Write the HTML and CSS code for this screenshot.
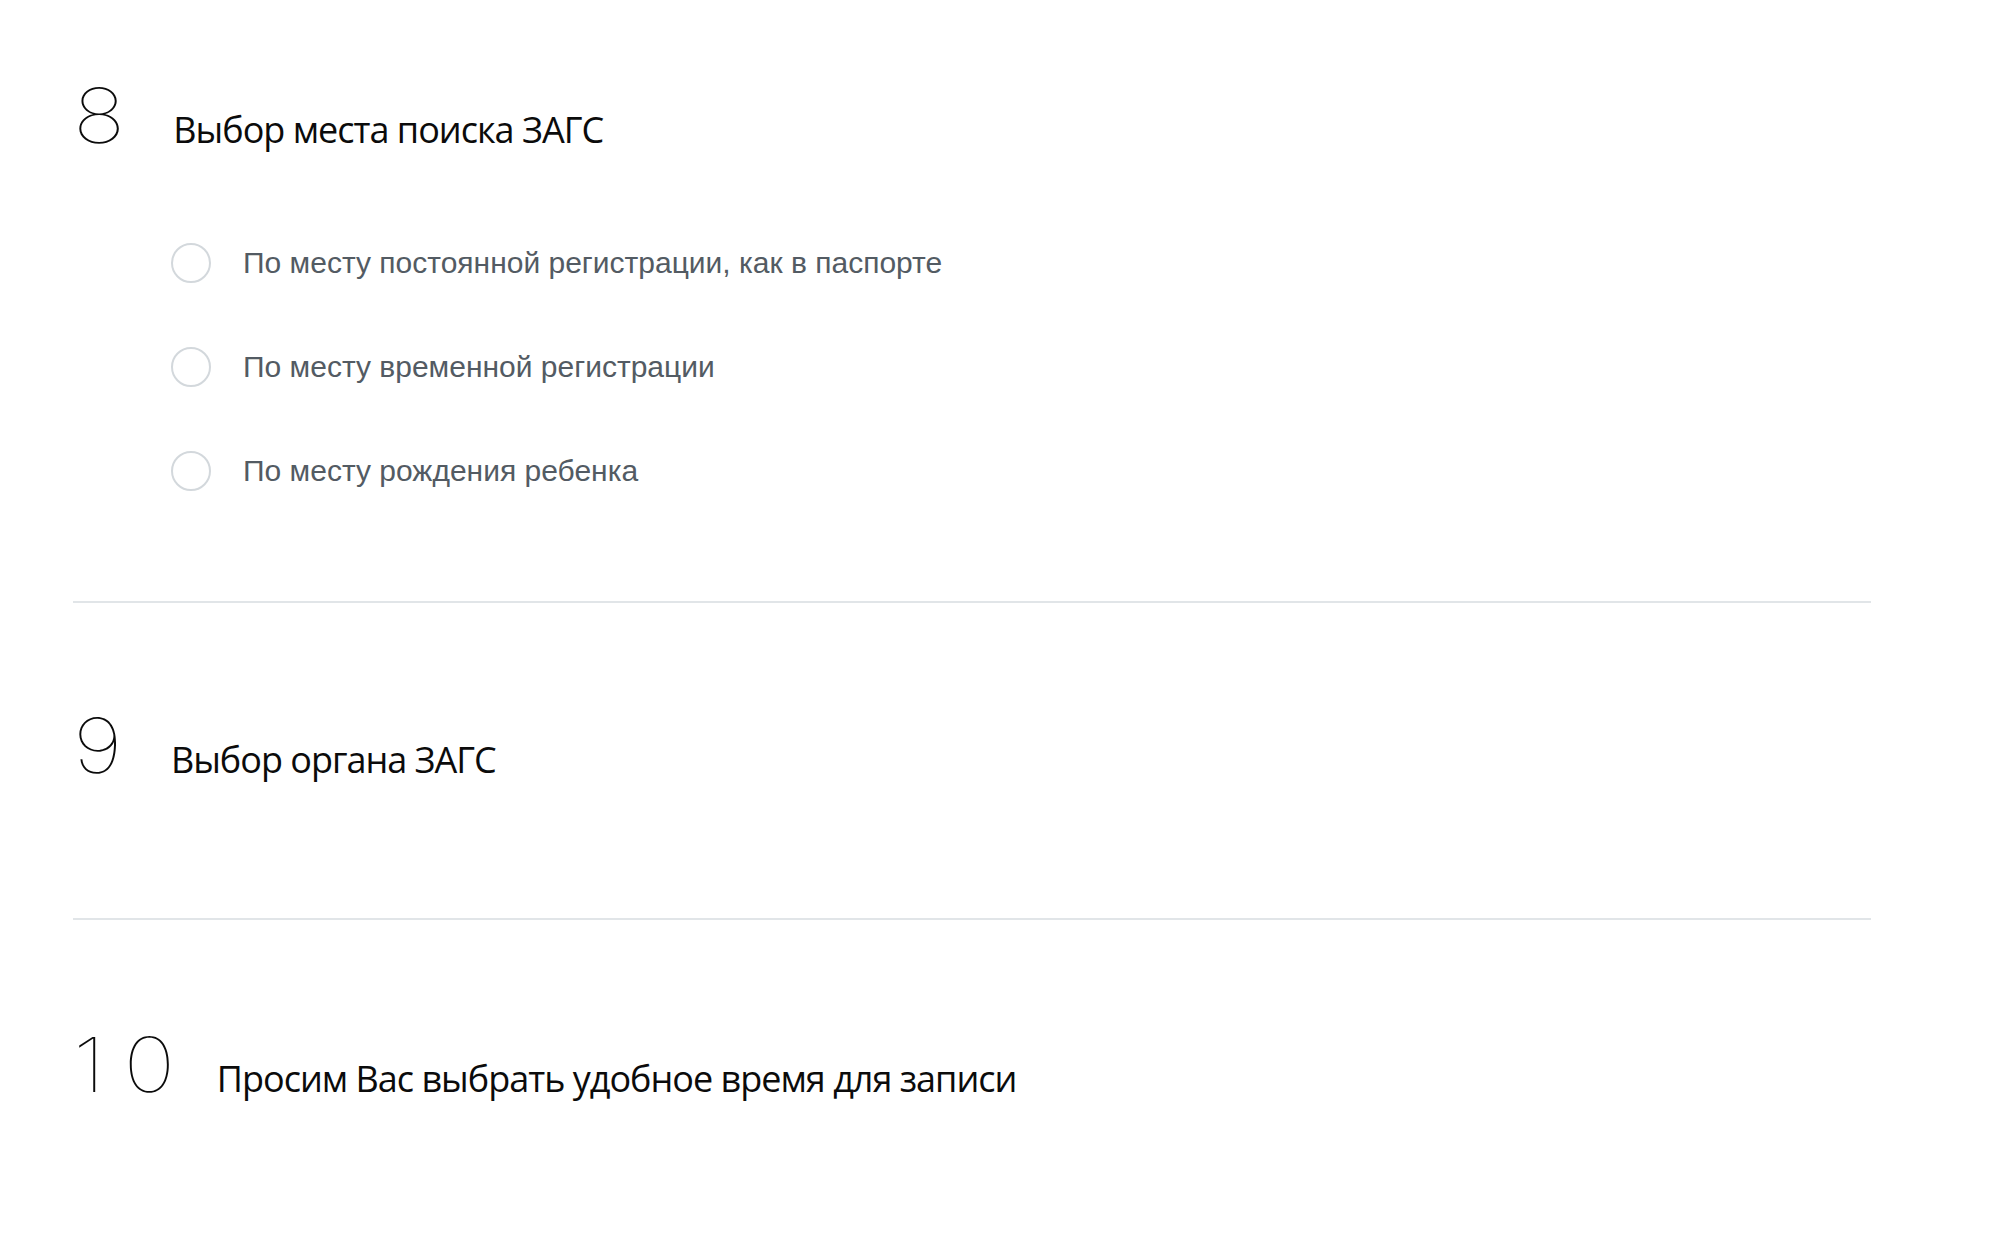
FILE: index.html
```html
<!DOCTYPE html>
<html lang="ru">
<head>
    <meta charset="UTF-8">
    <meta name="viewport" content="width=device-width, initial-scale=1.0">
    <title>Запись в ЗАГС</title>
    <link rel="stylesheet" href="styles.css">
</head>
<body>
    <div class="form">
        <!-- Step 8 -->
        <div class="step">
            <div class="step-head">
                <span class="step-num">8</span>
                <h3 class="step-title">Выбор места поиска ЗАГС</h3>
            </div>
            <div class="options">
                <label class="option">
                    <input type="radio" name="place">
                    <span class="radio"></span>
                    <span class="option-text">По месту постоянной регистрации, как в паспорте</span>
                </label>
                <label class="option">
                    <input type="radio" name="place">
                    <span class="radio"></span>
                    <span class="option-text">По месту временной регистрации</span>
                </label>
                <label class="option">
                    <input type="radio" name="place">
                    <span class="radio"></span>
                    <span class="option-text">По месту рождения ребенка</span>
                </label>
            </div>
        </div>

        <!-- Step 9 -->
        <div class="step empty">
            <div class="step-head">
                <span class="step-num">9</span>
                <h3 class="step-title">Выбор органа ЗАГС</h3>
            </div>
        </div>

        <!-- Step 10 -->
        <div class="step last">
            <div class="step-head">
                <span class="step-num">10</span>
                <h3 class="step-title">Просим Вас выбрать удобное время для записи</h3>
            </div>
        </div>
    </div>
</body>
</html>
```

FILE: styles.css
```css
body {
    margin: 0;
    background: #fff;
    font-family: "Liberation Sans", Arial, sans-serif;
}

.form {
    width: 1798px;
    margin-left: 73px;
    padding-top: 77px;
}

.step {
    border-bottom: 2px solid #e1e5e8;
    padding-bottom: 110px;
}
.step + .step {
    padding-top: 104px;
}
.step.empty {
    padding-bottom: 134px;
}
.step.last {
    border-bottom: none;
    padding-top: 106px;
}

.step-head {
    display: flex;
    align-items: baseline;
}

/* thin, slightly extended step digits */
.step-num {
    display: inline-block;
    font-family: Inter, sans-serif;
    font-weight: 100;
    font-size: 76px;
    line-height: 1;
    letter-spacing: 16px;
    color: #0b0b0b;
    transform: scaleX(1.15);
    transform-origin: left;
    margin-right: 39px;
}

.step-title {
    margin: 0;
    font-family: "Open Sans", sans-serif;
    font-weight: 400;
    font-size: 36px;
    letter-spacing: -1px;
    color: #0b0b0b;
}

.options {
    margin-left: 98px;
    margin-top: 89px;
    display: flex;
    flex-direction: column;
    gap: 64px;
}

.option {
    display: flex;
    align-items: center;
    cursor: pointer;
}
.option input {
    display: none;
}

.radio {
    width: 36px;
    height: 36px;
    border: 2px solid #d3d8dc;
    border-radius: 50%;
    margin-right: 32px;
}
.option input:checked + .radio {
    border-color: #0d4cd3;
    box-shadow: inset 0 0 0 8px #fff, inset 0 0 0 20px #0d4cd3;
}

.option-text {
    font-size: 30px;
    color: #535b63;
}
```
